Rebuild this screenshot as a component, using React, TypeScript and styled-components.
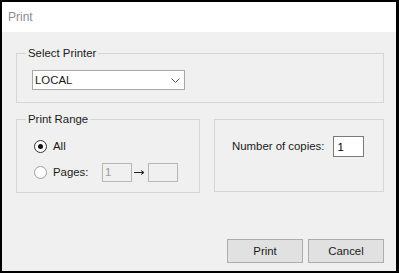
import React, { useState } from 'react';
import styled, { createGlobalStyle } from 'styled-components';

const GlobalStyle = createGlobalStyle`
  html, body {
    margin: 0;
    padding: 0;
    background: #000;
  }
  body {
    font-family: "Liberation Sans", Arial, sans-serif;
  }
`;

const Window = styled.div`
  margin: 2px 3px 2px 2px;
  width: 394px;
  height: 269px;
  background: #f0f0f0;
  display: flex;
  flex-direction: column;
`;

const TitleBar = styled.div`
  height: 30px;
  background: #fff;
  display: flex;
  align-items: center;
  padding-left: 6px;
  font-size: 12px;
  color: #8a8a96;
`;

const Content = styled.div`
  flex: 1;
  display: flex;
  flex-direction: column;
  padding: 14px 12px 8px 14px;
  font-size: 11.4px;
  color: #1a1a1a;
`;

const Group = styled.fieldset`
  margin: 0;
  padding: 0;
  border: 1px solid #d6d6d6;
  min-width: 0;
`;

const Legend = styled.legend`
  margin-left: 9px;
  padding: 0 2px;
  line-height: 14px;
`;

const PrinterBody = styled.div`
  padding: 10px 0 12px 15px;
`;

const Combo = styled.div`
  width: 145px;
  height: 18px;
  border: 1px solid #a8a8a8;
  background: #fff;
  display: flex;
  align-items: center;
  justify-content: space-between;
  padding: 0 4px 0 2px;
  box-sizing: content-box;
`;

const Row = styled.div`
  display: grid;
  grid-template-columns: 184px 170px;
  column-gap: 14px;
  margin-top: 9px;
  align-items: start;
`;

const RangeBody = styled.div`
  padding: 10px 0 10px 17px;
  display: flex;
  flex-direction: column;
  gap: 6px;
`;

const OptionRow = styled.div`
  height: 20px;
  display: flex;
  align-items: center;
`;

const Radio = styled.span<{ checked?: boolean }>`
  width: 11px;
  height: 11px;
  border-radius: 50%;
  border: 1px solid ${(p) => (p.checked ? '#333' : '#a0a0a0')};
  background: #fff;
  display: flex;
  align-items: center;
  justify-content: center;
  margin-right: 6px;
  &::after {
    content: '';
    width: 5px;
    height: 5px;
    border-radius: 50%;
    background: ${(p) => (p.checked ? '#111' : 'transparent')};
  }
`;

const OptionLabel = styled.span<{ width?: number }>`
  width: ${(p) => (p.width ? `${p.width}px` : 'auto')};
`;

const PageBox = styled.div`
  width: 30px;
  height: 19px;
  box-sizing: border-box;
  border: 1px solid #b5b5b5;
  background: #f0f0f0;
  color: #9a9a9a;
  padding-left: 2px;
  display: flex;
  align-items: center;
`;

const Arrow = styled.svg`
  margin: 0 3px 0 2px;
`;

const CopiesBox = styled.div`
  margin-top: 7px;
  height: 73px;
  border: 1px solid #d6d6d6;
  padding: 16px 0 0 17px;
  box-sizing: border-box;
  display: flex;
  align-items: flex-start;
`;

const CopiesLabel = styled.span`
  line-height: 21px;
  margin-right: 9px;
`;

const CopiesInput = styled.input`
  width: 31px;
  height: 21px;
  box-sizing: border-box;
  border: 1px solid #7a7a7a;
  background: #fff;
  font: inherit;
  color: #000;
  padding: 0 0 0 3px;
  outline: none;
`;

const Footer = styled.div`
  margin-top: auto;
  display: flex;
  justify-content: flex-end;
  gap: 5px;
`;

const Button = styled.button`
  width: 76px;
  height: 24px;
  background: #e1e1e1;
  border: 1px solid #adadad;
  font: inherit;
  color: #1a1a1a;
  padding: 0;
`;

const App = () => {
  const [copies, setCopies] = useState('1');

  return (
    <>
      <GlobalStyle />
      <Window>
        <TitleBar>Print</TitleBar>
        <Content>
          <Group>
            <Legend>Select Printer</Legend>
            <PrinterBody>
              <Combo>
                <span>LOCAL</span>
                <svg width="9" height="5" viewBox="0 0 9 5">
                  <path d="M0.5 0.5 L4.5 4.5 L8.5 0.5" fill="none" stroke="#555" strokeWidth="1" />
                </svg>
              </Combo>
            </PrinterBody>
          </Group>
          <Row>
            <Group>
              <Legend>Print Range</Legend>
              <RangeBody>
                <OptionRow>
                  <Radio checked />
                  <OptionLabel>All</OptionLabel>
                </OptionRow>
                <OptionRow>
                  <Radio />
                  <OptionLabel width={49}>Pages:</OptionLabel>
                  <PageBox>1</PageBox>
                  <Arrow width="11" height="7" viewBox="0 0 11 7">
                    <path d="M0 3.5 H9 M7 1.5 L10 3.5 L7 5.5" fill="none" stroke="#222" strokeWidth="1" />
                  </Arrow>
                  <PageBox />
                </OptionRow>
              </RangeBody>
            </Group>
            <CopiesBox>
              <CopiesLabel>Number of copies:</CopiesLabel>
              <CopiesInput value={copies} onChange={(e) => setCopies(e.target.value)} />
            </CopiesBox>
          </Row>
          <Footer>
            <Button>Print</Button>
            <Button>Cancel</Button>
          </Footer>
        </Content>
      </Window>
    </>
  );
};

export default App;
